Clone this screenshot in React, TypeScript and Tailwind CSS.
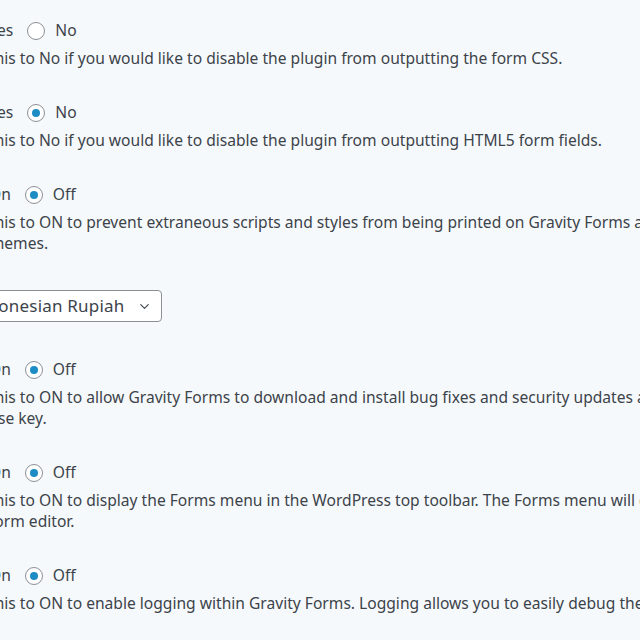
import { ChevronDown } from "lucide-react";

type Line = { text: string; indent?: number };

type RadioSetting = {
  kind: "radio";
  on: string;
  off: string;
  checked: "on" | "off";
  description: Line[];
};

type SelectSetting = {
  kind: "select";
  value: string;
};

type Setting = RadioSetting | SelectSetting;

const settings: Setting[] = [
  {
    kind: "radio",
    on: "Yes",
    off: "No",
    checked: "on",
    description: [
      { text: "Set this to No if you would like to disable the plugin from outputting the form CSS." },
    ],
  },
  {
    kind: "radio",
    on: "Yes",
    off: "No",
    checked: "off",
    description: [
      { text: "Set this to No if you would like to disable the plugin from outputting HTML5 form fields." },
    ],
  },
  {
    kind: "radio",
    on: "On",
    off: "Off",
    checked: "off",
    description: [
      {
        text: "Set this to ON to prevent extraneous scripts and styles from being printed on Gravity Forms admin pages, reducing conflicts with other plugins and",
      },
      { text: "themes.", indent: 27 },
    ],
  },
  { kind: "select", value: "Indonesian Rupiah" },
  {
    kind: "radio",
    on: "On",
    off: "Off",
    checked: "off",
    description: [
      {
        text: "Set this to ON to allow Gravity Forms to download and install bug fixes and security updates automatically in the background. Requires a valid",
      },
      { text: "license key.", indent: 2 },
    ],
  },
  {
    kind: "radio",
    on: "On",
    off: "Off",
    checked: "off",
    description: [
      {
        text: "Set this to ON to display the Forms menu in the WordPress top toolbar. The Forms menu will display the ten forms recently opened in the",
      },
      { text: "form editor.", indent: 27 },
    ],
  },
  {
    kind: "radio",
    on: "On",
    off: "Off",
    checked: "off",
    description: [
      {
        text: "Set this to ON to enable logging within Gravity Forms. Logging allows you to easily debug the inner workings of Gravity Forms to solve any issues.",
      },
    ],
  },
];

function Radio({ checked }: { checked: boolean }) {
  return (
    <span className="flex h-[18px] w-[18px] shrink-0 items-center justify-center rounded-full border border-[#8c8f94] bg-white">
      {checked && <span className="h-[8px] w-[8px] rounded-full bg-[#1e8cc4]" />}
    </span>
  );
}

function RadioRow({ s }: { s: RadioSetting }) {
  return (
    <div className="py-4">
      <div className="flex h-6 items-center">
        <Radio checked={s.checked === "on"} />
        <span className="ml-[9px]">{s.on}</span>
        <span className="ml-[14px]">
          <Radio checked={s.checked === "off"} />
        </span>
        <span className="ml-[10px]">{s.off}</span>
      </div>
      <div className="mt-[5px] leading-[21px]">
        {s.description.map((line) => (
          <p
            key={line.text}
            className="whitespace-nowrap"
            style={line.indent ? { paddingLeft: line.indent } : undefined}
          >
            {line.text}
          </p>
        ))}
      </div>
    </div>
  );
}

function SelectRow({ s }: { s: SelectSetting }) {
  return (
    <div className="py-4">
      <div className="py-[4px]">
        <div className="flex h-[32px] w-[200px] items-center justify-between rounded-[4px] border border-[#8c8f94] bg-white pl-[8px] pr-[9px] text-[17px] tracking-[0.2px]">
          <span>{s.value}</span>
          <ChevronDown className="h-[15px] w-[15px] text-[#3c434a]" strokeWidth={1.75} />
        </div>
      </div>
    </div>
  );
}

export default function App() {
  return (
    <div className="h-[640px] w-[640px] overflow-hidden bg-[#f6f9fc] text-[15.6px] text-[#3c434a] [font-family:'Noto_Sans',sans-serif]">
      <div className="-ml-[38px] mt-[3px]">
        {settings.map((s, i) =>
          s.kind === "radio" ? <RadioRow key={i} s={s} /> : <SelectRow key={i} s={s} />
        )}
      </div>
    </div>
  );
}
